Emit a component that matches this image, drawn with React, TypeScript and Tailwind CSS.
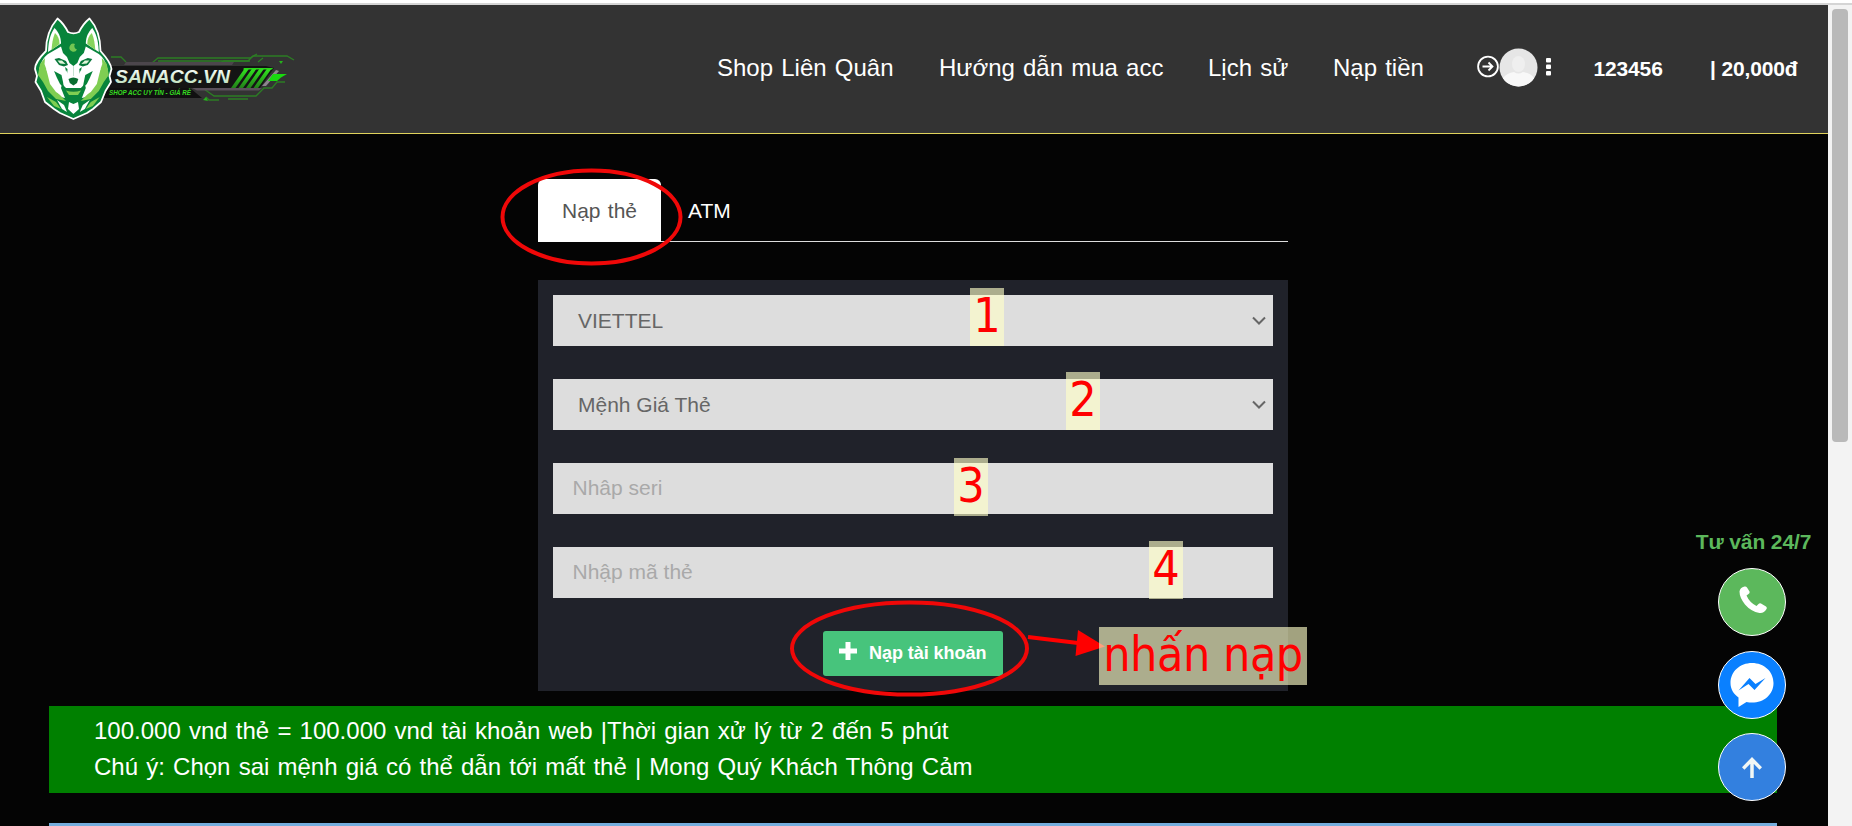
import React from "react";

function WolfHalf() {
  return (
    <g>
      {/* ear */}
      <path d="M54.500 28C49 36 48.500 44 48 52L61 43.500C61 37 58.500 32 54.500 28Z" fill="#fff" />
      <path d="M55 33C52.500 39 52 44 51.500 50L59.500 44C59.500 39 58 36 55 33Z" fill="#86d45c" />
      {/* brow and cheek */}
      <path d="M48 54L61 46.500L63 53L67 57L69.500 63L73.400 66V88L66 88L62 84L61 88L65 98L56 96L50 88L46 80L42 76L43.500 68L39 70C41 62 43 58 48 54Z" fill="#fff" />
      <path d="M40 64L45 58L44.500 64L47 71L51 80L58 93L66 101L56 99L48 91L43 82L38 75Z" fill="#7fce52" />
      <path d="M46 68L56 82L62.500 96L56 92L50 84Z" fill="#fff" />
      <path d="M54 71L61.500 75L63 82L64 88L60 84L57 78Z" fill="#07843b" />
      {/* eye */}
      <path d="M54.500 59L59 58L66 61L68 65L64 66.500L59 65Z" fill="#07783a" />
      <path d="M57.500 60.500L62 60.500L65.500 64L60 63.500Z" fill="#e2f6da" />
      <path d="M65 67L67.500 69L67 76Z" fill="#07843b" />
      {/* throat */}
      <path d="M47 97L56 102L61 109L54 106Z" fill="#7fce52" />
      <path d="M57 100L64 105L67 112L62 109Z" fill="#fff" />
    </g>
  );
}

function Logo() {
  return (
    <svg className="h-[110px] w-[270px]" viewBox="28 12 270 110">
      <defs>
        <linearGradient id="stripe" x1="0" y1="1" x2="0" y2="0">
          <stop offset="0" stopColor="#23801a" />
          <stop offset="1" stopColor="#30e81e" />
        </linearGradient>
        <linearGradient id="word" x1="0" y1="0" x2="0" y2="1">
          <stop offset="0" stopColor="#ffffff" />
          <stop offset="1" stopColor="#b5dcb5" />
        </linearGradient>
      </defs>
      <g fill="none" stroke="#2c7d24" strokeWidth="1.300">
        <path d="M111 57h10l5 5M152 63l6-5h92l7-4" />
        <path d="M158 61h90l5-5h34l7 4" />
        <path d="M258 62l5-4M218 64l6-3h26" />
        <path d="M204 89l10 7h42l8-8h8l5-6h8" />
        <path d="M206 97l3 3h10M228 99h20" />
      </g>
      <path d="M108 66h158l8 2-14 20H108z" fill="#141414" />
      <path d="M104 88h86l12 10H104z" fill="#101010" />
      <path d="M126 62h108l-2 3H124z" fill="#4c464c" />
      <path d="M192 88h70l-3 2.500h-62z" fill="#5b515b" />
      <path d="M245 68h4.500l-14 20h-4.500zM252.500 68h4.500l-14 20h-4.500zM260 68h4.500l-14 20h-4.500zM267.500 68h4.500l-14 20h-4.500z" fill="url(#stripe)" />
      <path d="M244 68h29l-1 1.500h-29z" fill="#2bd51b" />
      <path d="M276 70l-14 16h4l13-15z" fill="#8d858d" />
      <path d="M273 74h14l-6 3.500-4 3.500h-9z" fill="#19d90f" />
      <path d="M279 61h4l-2 3zM203 100l3-3 2 4z" fill="#26b31c" />
      <path d="M57.500 18.500C50 27 46 39 46 51C40 57 35 63 35 69L37 76L35.500 82L41 91L45 102L54 109L60 113L73.400 119L87 113L93 109L101 102L105.500 91L111 82L109.500 76L111.500 69C111 63 106 57 100.500 51C100.500 39 97 27 89.500 18.500C84 23 81 28 79 32C75 34 72 34 68 32C66 28 63 23 57.500 18.500Z" fill="#07843b" stroke="#fff" strokeWidth="1.800" strokeLinejoin="round" />
      <WolfHalf />
      <g transform="translate(146.800 0) scale(-1 1)"><WolfHalf /></g>
      <path d="M66 70L69 76H78L81 70L84 80L80 88H67L63 80Z" fill="#fff" />
      <path d="M68.500 79Q73.400 76 78.300 79L77 83L73.400 85.500L69.800 83Z" fill="#0a6d31" />
      <path d="M64 88L70 89.500L73.400 88.500L77 89.500L83 88L80 92H67Z" fill="#117b38" />
      <path d="M66 90.500Q73.400 93 81 90.500L78 95H69Z" fill="#7fce52" />
      <path d="M69 102L73.400 104L78 102L79 109L73.400 114L68 109Z" fill="#fff" />
      <path d="M75 44A4 4 0 1 0 77 49.500A3.500 3.500 0 0 1 75 44Z" fill="#72c652" />
      <text x="115" y="83" fontFamily="Liberation Sans" fontWeight="700" fontStyle="italic" fontSize="18" textLength="115" lengthAdjust="spacingAndGlyphs" fill="url(#word)">SANACC.VN</text>
      <text x="109" y="95" fontFamily="Liberation Sans" fontStyle="italic" fontWeight="700" fontSize="7.500" textLength="82" lengthAdjust="spacingAndGlyphs" fill="#35dc20">SHOP ACC UY TÍN - GIÁ RẺ</text>
    </svg>
  );
}

function Header() {
  return (
    <header className="flex h-[129px] shrink-0 items-start border-b border-[#e0d25c] bg-[#333333] text-white">
      <div className="ml-7 mt-[7px] shrink-0"><Logo /></div>
      <nav className="ml-[419px] flex gap-[45px] pt-[45px] text-2xl leading-[36px] whitespace-nowrap [word-spacing:1.5px]">
        <a className="w-[177px]">Shop Liên Quân</a>
        <a className="w-[224px]">Hướng dẫn mua acc</a>
        <a className="w-[80px]">Lịch sử</a>
        <a className="w-[92px]">Nạp tiền</a>
      </nav>
      <div className="mt-[42.5px] ml-[51px] flex h-[39px] w-[80px] shrink-0 items-center">
        <svg className="mb-px shrink-0" width="23" height="23" viewBox="0 0 23 23" fill="none" stroke="#fff" strokeWidth="1.800">
          <circle cx="12" cy="11.500" r="9.900" />
          <path d="M6.500 11.500h10M12.500 7.500l4 4-4 4" />
        </svg>
        <svg className="shrink-0" width="39" height="39" viewBox="0 0 39 39">
          <clipPath id="avatar"><circle cx="19.500" cy="19.500" r="19" /></clipPath>
          <g clipPath="url(#avatar)">
            <rect width="39" height="39" fill="#e6e6e6" />
            <ellipse cx="19.500" cy="16" rx="6.500" ry="8" fill="#efefef" />
            <path d="M4 39V30Q8 25 15 24q4 3 9 0 8 1 11 6v9z" fill="#f8f8f8" />
          </g>
        </svg>
        <svg className="ml-2 shrink-0" width="5" height="18" viewBox="0 0 5 18" fill="#fff">
          <rect width="5" height="4.500" rx="1" />
          <rect y="6.500" width="5" height="4.500" rx="1" />
          <rect y="13" width="5" height="4.500" rx="1" />
        </svg>
      </div>
      <div className="ml-[37.5px] flex pt-[47.500px] text-[21px] leading-[32px] font-bold tracking-[-0.15px] whitespace-nowrap">
        <span className="w-[116.5px]">123456</span>
        <span>| 20,000đ</span>
      </div>
    </header>
  );
}

function SelectField({ text }: { text: string }) {
  return (
    <div className="flex h-[51px] items-center justify-between bg-[#dddddd] pr-[7px] pl-[25px] text-[21px] text-[#666666]">
      <span>{text}</span>
      <svg width="14" height="10" viewBox="0 0 14 10" fill="none" stroke="#666" strokeWidth="2">
        <path d="M1 1.500l6 6 6-6" />
      </svg>
    </div>
  );
}

function InputField({ text }: { text: string }) {
  return (
    <div className="flex h-[51px] items-center bg-[#dddddd] pb-[2px] pl-[19.500px] text-[21px] text-[#a9a9a9]">
      {text}
    </div>
  );
}

const note =
  "absolute h-[58px] bg-[rgba(255,255,200,0.63)] text-center text-[48px] leading-[54px] whitespace-nowrap text-[#ff0000] font-['DejaVu_Sans_Condensed','DejaVu_Sans',sans-serif] [font-stretch:condensed]";

function Notes() {
  return (
    <div className="pointer-events-none absolute inset-0">
      <svg className="absolute inset-0" width="1828" height="826" fill="none" stroke="#f00808" strokeWidth="4">
        <ellipse cx="591.500" cy="217" rx="89" ry="46.500" />
        <ellipse cx="909.500" cy="648.500" rx="117.500" ry="46" />
        <path d="M1028 637L1078 643" stroke="#ff0000" />
        <path d="M1078 630L1075.500 656L1105 646.500Z" fill="#ff0000" stroke="none" />
      </svg>
      <span className={`${note} top-[288px] left-[970px] w-[34px]`}>1</span>
      <span className={`${note} top-[372px] left-[1066px] w-[34px]`}>2</span>
      <span className={`${note} top-[458px] left-[954px] w-[34px]`}>3</span>
      <span className={`${note} top-[541px] left-[1149px] w-[34px]`}>4</span>
      <span className={`${note} top-[627px] left-[1099px] w-[208px] tracking-[-0.5px]`}>nhấn nạp</span>
    </div>
  );
}

function Contact() {
  return (
    <aside className="absolute top-[524px] left-[1696px] flex w-[116px] flex-col items-center">
      <b className="-ml-px h-[44px] text-[21px] leading-[35px] tracking-[-0.1px] whitespace-nowrap text-[#5cb85c]">Tư vấn 24/7</b>
      <div className="-ml-1 flex flex-col gap-[14.500px]">
        <a className="flex size-[68px] items-center justify-center rounded-full border border-white bg-[#5cb85c]">
          <svg className="mb-[5px] ml-[2px]" width="28" height="28" viewBox="0 0 28 28">
            <path d="M5.500 .5Q7 0 8 1.500L10.500 5.500Q11 7 9.500 8L7.500 9.500Q10.500 16.500 17.500 20L19.500 18Q20.500 17 22 17.500L27 20.500Q28.300 21.500 27.500 23Q25 27.500 20.500 27Q12 25.500 6 18.500Q.5 11.500 .5 5.500Q1 1.500 5.500 .5Z" fill="#fff" />
          </svg>
        </a>
        <a className="flex size-[68px] items-center justify-center rounded-full border border-white bg-[#0a80ff]">
          <svg width="44" height="44" viewBox="0 0 44 44">
            <path d="M22 0C10 0 .5 8.500 .5 20c0 6 3 11 8 14.500V44l8-5c14 3 27-5.500 27-19C43.500 8.500 34 0 22 0Z" fill="#fff" />
            <path d="M8.500 27.500L19.500 15l6 6 10-6L24.500 27l-6-6Z" fill="#0a80ff" />
          </svg>
        </a>
        <a className="flex size-[68px] items-center justify-center rounded-full border border-white bg-[#3380df]">
          <svg width="20" height="21" viewBox="0 0 20 21" fill="none" stroke="#f2f7f5" strokeWidth="3.500">
            <path d="M10 21V2.500M1.200 11.500L10 2.500l8.800 9" />
          </svg>
        </a>
      </div>
    </aside>
  );
}

export default function App() {
  return (
    <div className="relative flex h-[826px] w-[1852px] overflow-hidden bg-[#040404] font-['Liberation_Sans',Arial,sans-serif]">
      <div className="flex w-[1828px] shrink-0 flex-col">
        <div className="h-[5px] shrink-0 border-b-2 border-[#d5d5d5] bg-white" />
        <Header />
        <main className="flex flex-col">
          <section className="mt-[45px] ml-[538px] w-[750px]">
            <div className="flex h-[63px] border-b border-[#dddddd] text-[21px] leading-[63px] [word-spacing:1.5px]">
              <a className="h-[63px] w-[123px] rounded-t-[6px] bg-white pl-6 text-[#555555]">Nạp thẻ</a>
              <a className="pl-[27px] text-white">ATM</a>
            </div>
            <form className="mt-[38px] flex h-[411px] flex-col gap-[33px] bg-[#20222a] p-[15px]">
              <SelectField text="VIETTEL" />
              <SelectField text="Mệnh Giá Thẻ" />
              <InputField text="Nhâp seri" />
              <InputField text="Nhập mã thẻ" />
              <button type="button" className="ml-[270px] flex h-[45px] w-[180px] items-center rounded-[3px] bg-[#47c47c] pb-px pl-4 text-[18px] font-bold tracking-[-0.05px] whitespace-nowrap text-white">
                <svg className="mr-3 mb-1 shrink-0" width="18" height="18" viewBox="0 0 18 18">
                  <path d="M6.500 0h5v6.500H18v5h-6.500V18h-5v-6.500H0v-5h6.500Z" fill="#fff" />
                </svg>
                Nạp tài khoản
              </button>
            </form>
          </section>
          <section className="mt-[15px] ml-[49px] h-[87px] w-[1728px] bg-[#008000] pt-[7px] pl-[45px] text-2xl leading-[36px] text-white [word-spacing:1.52px]">
            <p>100.000 vnd thẻ = 100.000 vnd tài khoản web |Thời gian xử lý từ 2 đến 5 phút</p>
            <p>Chú ý: Chọn sai mệnh giá có thể dẫn tới mất thẻ | Mong Quý Khách Thông Cảm</p>
          </section>
          <div className="mt-[30px] ml-[49px] h-[3px] w-[1728px] bg-[#75aedd]" />
        </main>
      </div>
      <div className="w-6 shrink-0">
        <div className="h-[5px] border-b-2 border-[#d5d5d5] bg-white" />
        <div className="flex h-full justify-center bg-[#f3f3f3] pt-1">
          <div className="h-[433px] w-4 rounded-sm bg-[#b9b9b9]" />
        </div>
      </div>
      <Contact />
      <Notes />
    </div>
  );
}
